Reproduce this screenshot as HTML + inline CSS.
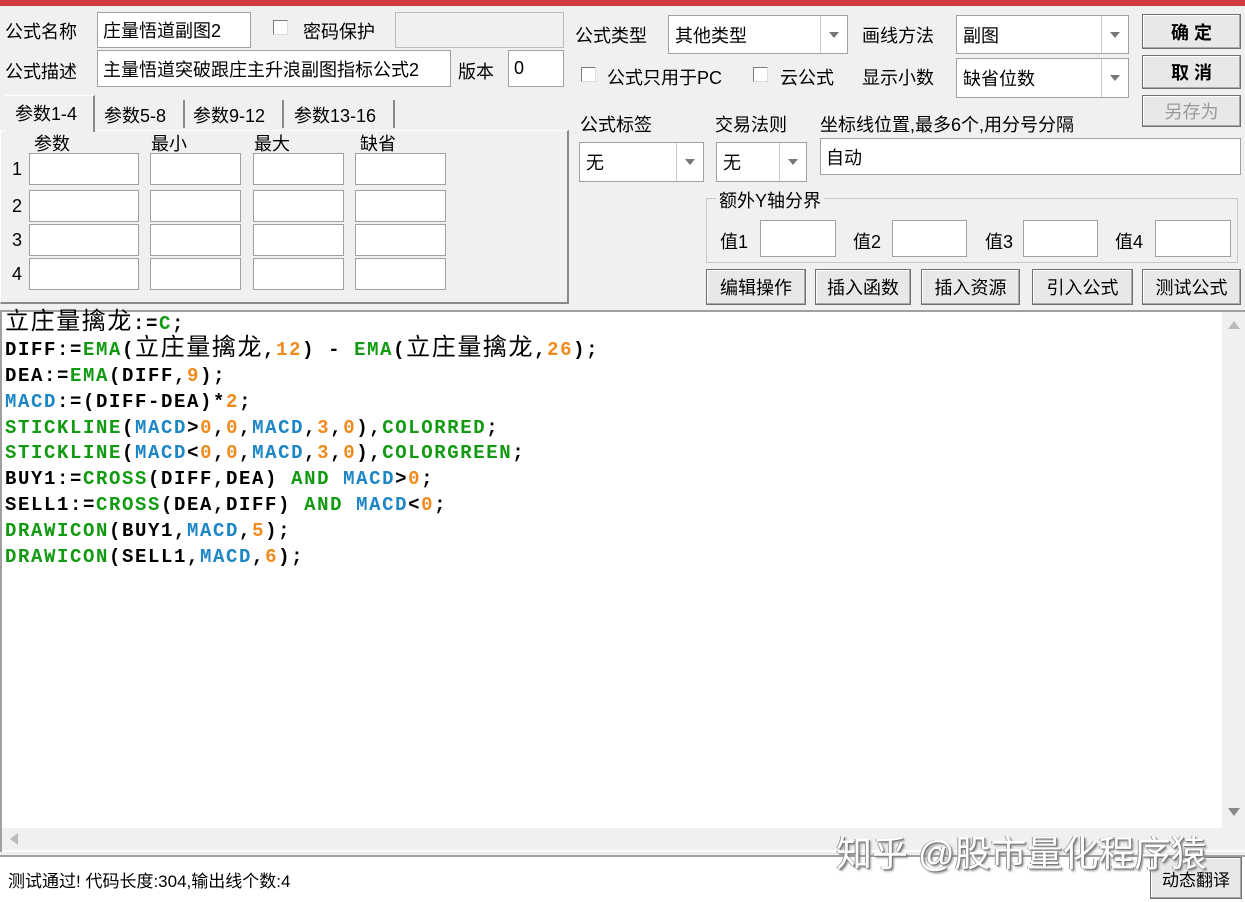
<!DOCTYPE html>
<html><head><meta charset="utf-8"><style>
*{box-sizing:border-box;margin:0;padding:0}
body{width:1245px;height:902px;background:#f0f0f0;position:relative;overflow:hidden;font-family:"Liberation Sans","Microsoft YaHei","Noto Sans CJK SC",sans-serif;font-size:18px;color:#000}
.a{position:absolute;white-space:nowrap}
.in{position:absolute;background:#fff;border:1px solid #a0a0a0;padding-left:5px;display:flex;align-items:center;font-size:18px}
.cb{position:absolute;width:15px;height:15px;background:#fff;border:1px solid #7a7a7a;border-right-color:#ddd;border-bottom-color:#ddd}
.combo{position:absolute;background:#fff;border:1px solid #a0a0a0;display:flex;align-items:center;padding-left:6px;font-size:18px}
.combo .dd{position:absolute;right:0;top:0;bottom:0;width:27px;border-left:1px solid #c8c8c8;display:flex;align-items:center;justify-content:center}
.combo .dd:after{content:"";border-left:5px solid transparent;border-right:5px solid transparent;border-top:6px solid #777}
.btn{position:absolute;background:#e8e8e8;border:1px solid #707070;box-shadow:inset -1px -1px 0 #a8a8a8,inset 1px 1px 0 #fff;display:flex;align-items:center;justify-content:center;font-size:18px}
.code{position:absolute;left:5px;top:312px;font-family:"Liberation Mono",monospace;font-weight:bold;font-size:19px;letter-spacing:1.6px;line-height:25.9px}
.code div{height:25.9px;line-height:25.9px}
.c{font-family:"Liberation Sans","Noto Sans CJK SC",sans-serif;font-weight:normal;font-size:24px;letter-spacing:1.6px;line-height:0}
.g{color:#129a12}.b{color:#1c86c6}.o{color:#f08a1c}
</style></head><body>
<div class="a" style="left:0;top:0;width:1245px;height:6px;background:#d13a40"></div>

<div class="a" style="left:5px;top:18px">公式名称</div>
<div class="in" style="left:97px;top:12px;width:154px;height:36px">庄量悟道副图2</div>
<div class="cb" style="left:273px;top:20px"></div>
<div class="a" style="left:303px;top:18px">密码保护</div>
<div class="in" style="left:395px;top:12px;width:169px;height:36px;background:#f0f0f0;border-color:#bbb"></div>
<div class="a" style="left:5px;top:58px">公式描述</div>
<div class="in" style="left:97px;top:50px;width:354px;height:37px">主量悟道突破跟庄主升浪副图指标公式2</div>
<div class="a" style="left:458px;top:58px">版本</div>
<div class="in" style="left:508px;top:50px;width:56px;height:37px">0</div>

<div class="a" style="left:0;top:130px;width:569px;height:174px;border:1px solid #fff;border-right:2px solid #8a8a8a;border-bottom:2px solid #8a8a8a"></div>
<div class="a" style="left:5px;top:95px;width:90px;height:37px;background:#f0f0f0;border-right:2px solid #8a8a8a;border-top:1px solid #fff;padding:4px 0 0 10px">参数1-4</div>
<div class="a" style="left:104px;top:102px">参数5-8</div>
<div class="a" style="left:183px;top:100px;height:28px;border-left:2px solid #8a8a8a"></div>
<div class="a" style="left:193px;top:102px">参数9-12</div>
<div class="a" style="left:282px;top:100px;height:28px;border-left:2px solid #8a8a8a"></div>
<div class="a" style="left:294px;top:102px">参数13-16</div>
<div class="a" style="left:393px;top:100px;height:28px;border-left:2px solid #8a8a8a"></div>
<div class="a" style="left:34px;top:130px">参数</div>
<div class="a" style="left:151px;top:130px">最小</div>
<div class="a" style="left:254px;top:130px">最大</div>
<div class="a" style="left:360px;top:130px">缺省</div>
<div class="a" style="left:12px;top:159px">1</div><div class="a" style="left:12px;top:196px">2</div><div class="a" style="left:12px;top:230px">3</div><div class="a" style="left:12px;top:264px">4</div>
<div class="in" style="left:29px;top:153px;width:110px;height:32px"></div><div class="in" style="left:150px;top:153px;width:91px;height:32px"></div><div class="in" style="left:253px;top:153px;width:91px;height:32px"></div><div class="in" style="left:355px;top:153px;width:91px;height:32px"></div>
<div class="in" style="left:29px;top:190px;width:110px;height:32px"></div><div class="in" style="left:150px;top:190px;width:91px;height:32px"></div><div class="in" style="left:253px;top:190px;width:91px;height:32px"></div><div class="in" style="left:355px;top:190px;width:91px;height:32px"></div>
<div class="in" style="left:29px;top:224px;width:110px;height:32px"></div><div class="in" style="left:150px;top:224px;width:91px;height:32px"></div><div class="in" style="left:253px;top:224px;width:91px;height:32px"></div><div class="in" style="left:355px;top:224px;width:91px;height:32px"></div>
<div class="in" style="left:29px;top:258px;width:110px;height:32px"></div><div class="in" style="left:150px;top:258px;width:91px;height:32px"></div><div class="in" style="left:253px;top:258px;width:91px;height:32px"></div><div class="in" style="left:355px;top:258px;width:91px;height:32px"></div>

<div class="a" style="left:575px;top:22px">公式类型</div>
<div class="combo" style="left:668px;top:15px;width:180px;height:39px">其他类型<span class="dd"></span></div>
<div class="a" style="left:862px;top:22px">画线方法</div>
<div class="combo" style="left:956px;top:15px;width:173px;height:39px">副图<span class="dd"></span></div>
<div class="btn" style="left:1142px;top:14px;width:99px;height:35px;font-weight:bold">确&nbsp;定</div>
<div class="btn" style="left:1142px;top:55px;width:99px;height:34px;font-weight:bold">取&nbsp;消</div>
<div class="btn" style="left:1142px;top:95px;width:99px;height:32px;color:#9a9a9a">另存为</div>
<div class="cb" style="left:581px;top:67px"></div>
<div class="a" style="left:607px;top:64px">公式只用于PC</div>
<div class="cb" style="left:753px;top:67px"></div>
<div class="a" style="left:780px;top:64px">云公式</div>
<div class="a" style="left:862px;top:64px">显示小数</div>
<div class="combo" style="left:956px;top:58px;width:173px;height:40px">缺省位数<span class="dd"></span></div>
<div class="a" style="left:580px;top:111px">公式标签</div>
<div class="a" style="left:715px;top:111px">交易法则</div>
<div class="a" style="left:820px;top:111px">坐标线位置,最多6个,用分号分隔</div>
<div class="combo" style="left:579px;top:142px;width:125px;height:40px">无<span class="dd"></span></div>
<div class="combo" style="left:716px;top:142px;width:91px;height:40px">无<span class="dd"></span></div>
<div class="in" style="left:820px;top:138px;width:421px;height:37px">自动</div>
<div class="a" style="left:706px;top:198px;width:532px;height:65px;border:1px solid #c8c8c8"></div>
<div class="a" style="left:716px;top:187px;background:#f0f0f0;padding:0 3px">额外Y轴分界</div>
<div class="a" style="left:720px;top:228px">值1</div><div class="in" style="left:760px;top:220px;width:76px;height:37px"></div>
<div class="a" style="left:853px;top:228px">值2</div><div class="in" style="left:892px;top:220px;width:75px;height:37px"></div>
<div class="a" style="left:985px;top:228px">值3</div><div class="in" style="left:1023px;top:220px;width:75px;height:37px"></div>
<div class="a" style="left:1115px;top:228px">值4</div><div class="in" style="left:1155px;top:220px;width:76px;height:37px"></div>
<div class="btn" style="left:706px;top:269px;width:100px;height:36px">编辑操作</div>
<div class="btn" style="left:815px;top:269px;width:96px;height:36px">插入函数</div>
<div class="btn" style="left:921px;top:269px;width:99px;height:36px">插入资源</div>
<div class="btn" style="left:1032px;top:269px;width:101px;height:36px">引入公式</div>
<div class="btn" style="left:1142px;top:269px;width:99px;height:36px">测试公式</div>

<div class="a" style="left:0;top:310px;width:1245px;height:542px;background:#fff;border-top:2px solid #a0a0a0;border-left:2px solid #a0a0a0"></div>
<div class="a" style="left:1222px;top:312px;width:23px;height:516px;background:#f0f0f0"></div>
<div class="a" style="left:1228px;top:321px;border-left:6px solid transparent;border-right:6px solid transparent;border-bottom:8px solid #bbb"></div>
<div class="a" style="left:1228px;top:808px;border-left:6px solid transparent;border-right:6px solid transparent;border-top:8px solid #888"></div>
<div class="a" style="left:2px;top:828px;width:1243px;height:22px;background:#f0f0f0"></div>
<div class="a" style="left:10px;top:833px;border-top:6px solid transparent;border-bottom:6px solid transparent;border-right:8px solid #bbb"></div>
<div class="code">
<div><span class="c">立庄量擒龙</span>:=<span class="g">C</span>;</div>
<div>DIFF:=<span class="g">EMA</span>(<span class="c">立庄量擒龙</span>,<span class="o">12</span>) - <span class="g">EMA</span>(<span class="c">立庄量擒龙</span>,<span class="o">26</span>);</div>
<div>DEA:=<span class="g">EMA</span>(DIFF,<span class="o">9</span>);</div>
<div><span class="b">MACD</span>:=(DIFF-DEA)*<span class="o">2</span>;</div>
<div><span class="g">STICKLINE</span>(<span class="b">MACD</span>&gt;<span class="o">0</span>,<span class="o">0</span>,<span class="b">MACD</span>,<span class="o">3</span>,<span class="o">0</span>),<span class="g">COLORRED</span>;</div>
<div><span class="g">STICKLINE</span>(<span class="b">MACD</span>&lt;<span class="o">0</span>,<span class="o">0</span>,<span class="b">MACD</span>,<span class="o">3</span>,<span class="o">0</span>),<span class="g">COLORGREEN</span>;</div>
<div>BUY1:=<span class="g">CROSS</span>(DIFF,DEA) <span class="g">AND</span> <span class="b">MACD</span>&gt;<span class="o">0</span>;</div>
<div>SELL1:=<span class="g">CROSS</span>(DEA,DIFF) <span class="g">AND</span> <span class="b">MACD</span>&lt;<span class="o">0</span>;</div>
<div><span class="g">DRAWICON</span>(BUY1,<span class="b">MACD</span>,<span class="o">5</span>);</div>
<div><span class="g">DRAWICON</span>(SELL1,<span class="b">MACD</span>,<span class="o">6</span>);</div>
</div>
<div class="a" style="left:0;top:855px;width:1245px;height:47px;background:#fff;border-top:2px solid #a0a0a0"></div>
<div class="a" style="left:8px;top:867px;font-size:17px">测试通过! 代码长度:304,输出线个数:4</div>
<div class="btn" style="left:1150px;top:857px;width:92px;height:42px;font-size:17px">动态翻译</div>
<div class="a" style="left:836px;top:825px;font-size:36px;color:#fff;text-shadow:1px 1px 0 #777,-1px 0 0 #999,2px 2px 2px #888">知乎 @股市量化程序猿</div>
</body></html>
